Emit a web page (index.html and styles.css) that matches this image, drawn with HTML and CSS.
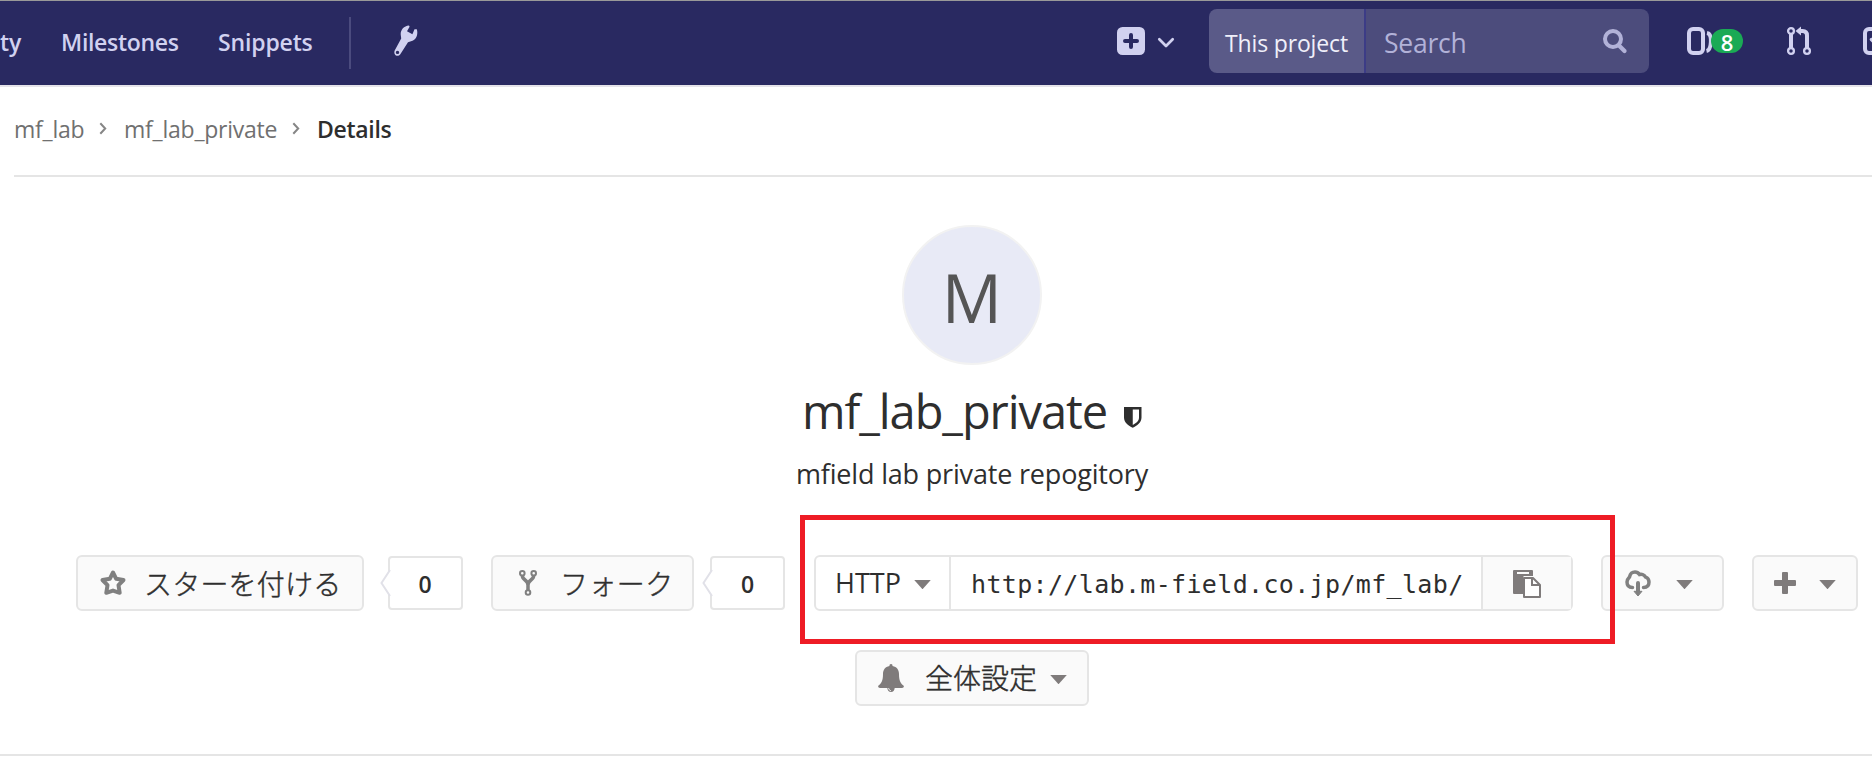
FILE: index.html
```html
<!DOCTYPE html>
<html lang="ja">
<head>
<meta charset="utf-8">
<title>mf_lab_private</title>
<link rel="stylesheet" href="styles.css">
</head>
<body>
<header class="navbar">
  <nav class="nav-links">
    <a class="link-activity">ty</a>
    <a class="link-milestones">Milestones</a>
    <a class="link-snippets">Snippets</a>
  </nav>
  <span class="nav-divider"></span>
  <svg class="icon-wrench" width="24" height="32" viewBox="0 0 24 32"><path fill="currentColor" fill-rule="evenodd" d="M15 0.4C10 0.8 6.500 4.500 6.700 9.500L7.200 13.500L0.700 25.500C-1 29.500 3.500 33 6.300 29.200L14 17.200L18.500 15.800C22.500 14 24.300 9 22.800 4.200L20.500 4.200L18.400 9.200L13 6.300L15.600 1.700ZM3.500 25.700a1.700 1.700 0 1 1 0 3.400a1.700 1.700 0 1 1 0-3.400Z"/></svg>
  <div class="new-menu">
    <svg width="28" height="28" viewBox="0 0 28 28"><rect width="28" height="28" rx="5.500" fill="#d1d1f0"/><path d="M14 8v12M8 14h12" stroke="#292961" stroke-width="4" stroke-linecap="round"/></svg>
    <svg class="new-chevron" width="18" height="12" viewBox="0 0 18 12"><path d="M2.300 2.300L9 9L15.700 2.300" fill="none" stroke="#d1d1f0" stroke-width="2.700" stroke-linecap="round" stroke-linejoin="round"/></svg>
  </div>
  <div class="search">
    <div class="search-scope"><span>This project</span></div>
    <div class="search-input"><span>Search</span>
      <svg width="24" height="25" viewBox="0 0 24 25"><circle cx="10" cy="10" r="8" fill="none" stroke="#b2b2d8" stroke-width="4"/><path d="M16 16.500L21.500 22" stroke="#b2b2d8" stroke-width="4.300" stroke-linecap="round"/></svg>
    </div>
  </div>
  <div class="counter">
    <svg width="27" height="28" viewBox="0 0 27 28"><rect x="2" y="2" width="14" height="24" rx="4" fill="none" stroke="#d1d1f0" stroke-width="4"/><path d="M20 6C26 7 24.500 23 19.500 24" fill="none" stroke="#d1d1f0" stroke-width="4"/></svg>
    <span class="badge">8</span>
  </div>
  <svg class="icon-merge" width="26" height="30" viewBox="0 0 26 30"><g fill="none" stroke="#d1d1f0"><path d="M5 8v14M21 22V9.500Q21 5 16.500 5H13" stroke-width="4"/><circle cx="5" cy="5" r="2.900" stroke-width="2.300" fill="#292961"/><circle cx="5" cy="25" r="2.900" stroke-width="2.300" fill="#292961"/><circle cx="21" cy="25" r="2.900" stroke-width="2.300" fill="#292961"/></g><path d="M9.500 5L15 .5V9.500Z" fill="#d1d1f0"/></svg>
  <svg class="icon-todo" width="28" height="28" viewBox="0 0 28 28"><rect x="2" y="2" width="24" height="24" rx="4" fill="none" stroke="#d1d1f0" stroke-width="4"/><path d="M8.500 12.500L13 17L21 8" fill="none" stroke="#d1d1f0" stroke-width="3.500" stroke-linecap="round"/></svg>
</header>

<div class="breadcrumbs">
  <a class="crumb-group">mf_lab</a>
  <svg width="8" height="13" viewBox="0 0 8 13"><path d="M1.300 1.300L6.200 6.500L1.300 11.700" fill="none" stroke="#868686" stroke-width="2"/></svg>
  <a class="crumb-project">mf_lab_private</a>
  <svg width="8" height="13" viewBox="0 0 8 13"><path d="M1.300 1.300L6.200 6.500L1.300 11.700" fill="none" stroke="#868686" stroke-width="2"/></svg>
  <span class="crumb-page">Details</span>
</div>

<main class="project-home">
  <div class="avatar"><span>M</span></div>
  <h1 class="project-title"><span>mf_lab_private</span>
    <svg width="18" height="21" viewBox="0 0 18 21"><path fill="#2e2e2e" fill-rule="evenodd" d="M0 0H17.500V10.500C17.500 15.500 13 18.800 8.750 20.800C4.500 18.800 0 15.500 0 10.500ZM8.750 2.500V18C12 16.200 15 14 15 10.500V2.500Z"/></svg>
  </h1>
  <p class="project-desc"><span>mfield lab private repogitory</span></p>

  <div class="actions">
    <a class="btn btn-star">
      <svg width="26" height="26" viewBox="0 0 26 26"><path d="M13 2.500L16.200 8.800L23.500 10L18.500 15.200L19.700 22.800L13 20.600L6.300 22.800L7.500 15.200L2.500 10L9.800 8.800Z" fill="none" stroke="#808080" stroke-width="4" stroke-linejoin="round"/></svg>
      <span>スターを付ける</span>
    </a>
    <span class="count count-star"><svg width="10" height="26" viewBox="0 0 10 26"><path d="M10 0L1.500 13L10 26" fill="#fff" stroke="#e1e1e8" stroke-width="2"/></svg><b>0</b></span>
    <a class="btn btn-fork">
      <svg width="18" height="26" viewBox="0 0 18 26"><g fill="none" stroke="#808080"><circle cx="3.300" cy="3.300" r="2.300" stroke-width="2"/><circle cx="14.700" cy="3.300" r="2.300" stroke-width="2"/><circle cx="9" cy="22.500" r="2.300" stroke-width="2"/><path d="M3.300 5.500C3.300 10.500 9 9.500 9 15V20M14.700 5.500C14.700 10.500 9 9.500 9 15" stroke-width="3.500"/></g></svg>
      <span>フォーク</span>
    </a>
    <span class="count count-fork"><svg width="10" height="26" viewBox="0 0 10 26"><path d="M10 0L1.500 13L10 26" fill="#fff" stroke="#e1e1e8" stroke-width="2"/></svg><b>0</b></span>
    <div class="clone">
      <div class="clone-protocol"><span>HTTP</span><i class="caret"></i></div>
      <div class="clone-url"><span>http://lab.m-field.co.jp/mf_lab/</span></div>
      <div class="clone-copy"><svg width="28" height="28" viewBox="0 0 28 28"><path fill="#7f7b7b" fill-rule="evenodd" d="M1 0H19Q20 0 20 1V6H10.500V24H1Q0 24 0 23V1Q0 0 1 0ZM4 2V4H16V2Z"/><path fill="#fff" stroke="#7f7b7b" stroke-width="2" stroke-linejoin="round" d="M11 8H20L27 15V27H11Z"/><path d="M19 8V15H27" fill="none" stroke="#7f7b7b" stroke-width="2"/></svg></div>
      <div class="highlight"></div>
    </div>
    <a class="btn btn-download">
      <svg width="26" height="27" viewBox="0 0 26 27"><path d="M7.500 17.500C3.500 17.500 2 15.500 2 12C2 9.500 3.500 8 4.500 7C5.500 3 7 2 10 2C12 2 13.500 3 14.500 4.500C17 3.800 19.500 5 20.500 7C23 8 24 10 24 12C24 15.500 22 17.500 18.500 17.500" fill="none" stroke="#808080" stroke-width="3.500" stroke-linecap="round"/><path d="M13 13V22" stroke="#808080" stroke-width="4" stroke-linecap="round"/><path d="M9 21.300H17L13 26Z" fill="#808080" stroke="#808080" stroke-linejoin="round"/></svg>
      <i class="caret"></i>
    </a>
    <a class="btn btn-add">
      <svg width="22" height="22" viewBox="0 0 22 22"><path fill="#7f7b7b" d="M9 0H13Q14 0 14 1V8H21Q22 8 22 9V13Q22 14 21 14H14V21Q14 22 13 22H9Q8 22 8 21V14H1Q0 14 0 13V9Q0 8 1 8H8V1Q8 0 9 0Z"/></svg>
      <i class="caret"></i>
    </a>
    <a class="btn btn-notify">
      <svg width="26" height="28" viewBox="0 0 26 28"><path fill="#7f7b7b" d="M13 0C14.200 0 14.600 .8 14.500 2C19 2.700 21 6 21 10C21 16.500 22.500 19.500 26 22Q25.800 24 24 24H16.700Q16.200 28 13 28Q9.800 28 9.300 24H2Q.2 24 0 22C3.500 19.500 5 16.500 5 10C5 6 7 2.700 11.500 2C11.400 .8 11.800 0 13 0Z"/><path d="M10.500 24Q11 26.600 13 26.800" fill="none" stroke="#fff" stroke-width=".8"/></svg>
      <span>全体設定</span><i class="caret"></i>
    </a>
  </div>
</main>
</body>
</html>
```
FILE: styles.css
```css
* { box-sizing: border-box; }
body {
  margin: 0;
  height: 775px;
  overflow: hidden;
  background: #fff;
  color: #2e2e2e;
  font-family: "Open Sans", "Noto Sans CJK JP", sans-serif;
}
svg { display: block; flex: none; overflow: visible; }
span, a, b { white-space: nowrap; }

.navbar {
  display: flex;
  height: 87px;
  background: #292961;
  border-top: 1px solid #999;
  border-bottom: 2px solid #e5e3ea;
  color: #d1d1f0;
  overflow: hidden;
}
.nav-links { display: flex; width: 349px; font-size: 23px; font-weight: 600; line-height: 83px; flex: none; }
.nav-links a { flex: none; }
.link-activity { width: 61px; }
.link-milestones { width: 157px; letter-spacing: -0.3px; }
.link-snippets { letter-spacing: -0.15px; }
.nav-divider { width: 2px; height: 52px; margin-top: 16px; background: #4b4b7e; flex: none; }
.icon-wrench { margin: 24px 0 0 43px; }
.new-menu { display: flex; margin: 26px 0 0 699px; width: 92px; flex: none; }
.new-chevron { margin: 10px 0 0 12px; }
.search { display: flex; width: 440px; height: 64px; margin-top: 8px; border-radius: 8px; overflow: hidden; flex: none; }
.search-scope {
  width: 157px; padding-left: 16px; background: #5a5a88; border-right: 2px solid #3c3c86;
  color: #f0f0fa; font-size: 23px; line-height: 68px; letter-spacing: -0.15px;
}
.search-input {
  display: flex; justify-content: space-between; flex: 1; padding: 0 22px 0 18px;
  background: #4c4c7c; color: #b2b2d8; font-size: 26.5px; line-height: 68px; letter-spacing: -0.25px;
}
.search-input svg { margin-top: 20px; }
.counter { display: flex; margin: 26px 0 0 38px; width: 100px; flex: none; }
.badge {
  width: 32px; height: 24px; margin: 2px 0 0 -3px; border-radius: 12px; background: #1aaa55;
  color: #fff; font-size: 22px; font-weight: 600; line-height: 26px; text-align: center; position: relative;
}
.icon-merge { margin: 25px 0 0 -1px; }
.icon-todo { margin: 26px 0 0 51px; }

.breadcrumbs {
  display: flex; height: 90px; margin-left: 14px; border-bottom: 2px solid #e5e5e5;
  color: #707070; font-size: 23px; line-height: 84px; letter-spacing: -0.23px;
}
.breadcrumbs svg { margin-top: 35px; }
.crumb-group { width: 85px; }
.crumb-project { width: 168px; margin-left: 17px; }
.breadcrumbs .crumb-page { margin-left: 17px; color: #2e2e2e; font-weight: 600; letter-spacing: -0.3px; }

.project-home {
  display: flex; flex-direction: column; align-items: center;
  height: 579px; padding-top: 48px; border-bottom: 2px solid #e5e5e5;
}
.avatar {
  width: 140px; height: 140px; margin-left: 72px; border: 2px solid #f2f2f2; border-radius: 50%;
  background: #e8eaf6; color: #555; font-size: 67px; line-height: 141px; text-align: center; flex: none;
}
.project-title {
  display: flex; width: 340px; height: 76px; margin: 10px 0 0 74px;
  font-size: 47px; font-weight: 400; line-height: 73px; letter-spacing: -1.05px; flex: none;
}
.project-title span { width: 322px; margin-left: -1px; }
.project-title svg { margin-top: 32px; }
.project-desc { width: 353px; height: 40px; margin: 4px 0 0 73px; font-size: 27px; line-height: 38px; letter-spacing: -0.18px; flex: none; }

.actions { display: flex; flex-wrap: wrap; width: 1872px; margin-top: 60px; padding-left: 76px; flex: none; align-content: flex-start; }
.btn {
  display: flex; align-items: center; height: 56px; flex: none; font-weight: 300;
  background: #fafafa; border: 2px solid #e5e5e5; border-radius: 6px; font-size: 28px; line-height: 52px;
  font-family: "Noto Sans CJK JP", sans-serif; -webkit-text-stroke: 0.45px #2e2e2e;
}
.caret { width: 17px; height: 9.5px; background: #7f7b7b; clip-path: polygon(0 0, 100% 0, 50% 100%); flex: none; }
.btn-star { width: 288px; padding-left: 22px; }
.btn-star span { margin-left: 18px; letter-spacing: 0.2px; }
.btn-fork { width: 203px; margin-left: 28px; padding-left: 26px; }
.btn-fork span { margin-left: 23px; letter-spacing: 0.4px; }
.count {
  position: relative; width: 75px; height: 54px; margin-top: 1px; border: 2px solid #e5e5e5;
  border-radius: 4px; text-align: center; font-size: 23px; line-height: 52px; flex: none;
}
.count b { font-weight: 600; }
.count svg { position: absolute; left: -10px; top: 12px; }
.count-star { margin-left: 24px; padding-right: 1px; }
.count-fork { margin-left: 16px; }
.clone { position: relative; display: flex; width: 759px; height: 56px; margin-left: 29px; border: 2px solid #e5e5e5; border-radius: 6px; line-height: 54px; flex: none; }
.clone-protocol { display: flex; align-items: center; width: 135px; padding-left: 19px; border-right: 2px solid #e5e5e5; font-size: 27px; }
.clone-protocol span { width: 79px; }
.clone-protocol .caret { margin-top: 3px; }
.clone-url { width: 532px; padding-left: 20px; border-right: 2px solid #e5e5e5; font-family: "DejaVu Sans Mono", monospace; font-size: 25px; line-height: 56px; letter-spacing: 0.34px; }
.clone-copy { flex: 1; padding: 13px 0 0 30px; background: #fafafa; }
.highlight { position: absolute; left: -16px; top: -42px; width: 815px; height: 129px; border: 5px solid #ee1c25; z-index: 2; }
.btn-download { width: 123px; margin-left: 28px; padding-left: 22px; }
.btn-download .caret { margin: 3px 0 0 25px; }
.btn-add { width: 106px; margin-left: 28px; padding-left: 20px; }
.btn-add .caret { margin: 3px 0 0 23px; }
.btn-notify { width: 234px; margin: 39px 0 0 779px; padding-left: 21px; }
.btn-notify span { margin-left: 21px; line-height: 50px; padding-bottom: 2px; }
.btn-notify .caret { margin: 3px 0 0 13px; }
```
